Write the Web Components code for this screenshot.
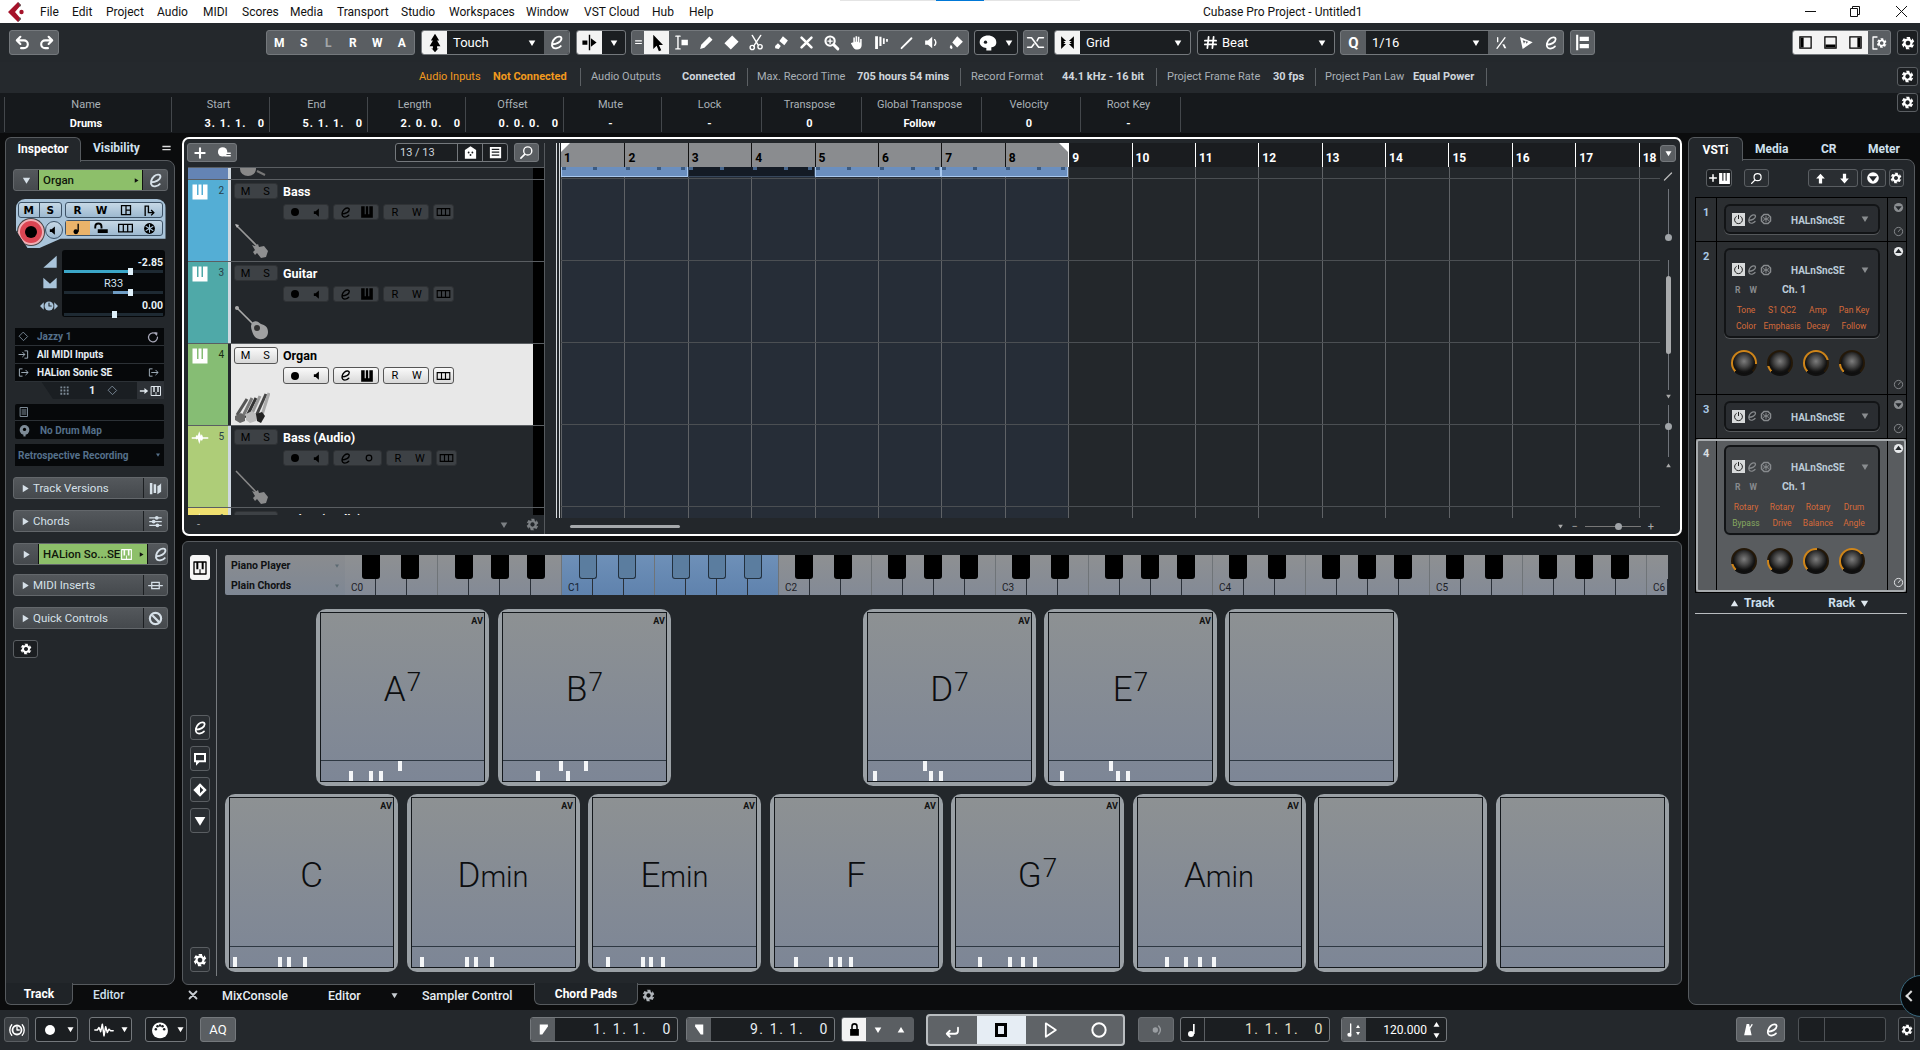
<!DOCTYPE html>
<html lang="en"><head><meta charset="utf-8"><title>Cubase Pro Project - Untitled1</title>
<style>html,body{margin:0;padding:0;background:#0b0c0d;overflow:hidden;width:1920px;height:1050px}</style>
</head><body>
<cb-app></cb-app>
<script>
const BASE=`*{box-sizing:border-box}
:host{display:block;font-family:Roboto,"Liberation Sans",sans-serif;font-size:11px;color:#dfe6ec}
svg{display:block;flex:none}
.g{display:flex;height:25px;border:1px solid #74787c;border-radius:3px;overflow:hidden;background:#5a5e62;color:#fff;align-items:stretch}
.c{flex:1;display:flex;align-items:center;justify-content:center;min-width:0}
.w{background:#f3f3f3;color:#000}.d{background:#1b1e21}
.row{display:flex;align-items:center}
.b{font-weight:700}`;
const S=(d,w=2.5)=>`<path d="${d}" fill="none" stroke="currentColor" stroke-width="${w}" stroke-linecap="round" stroke-linejoin="round"/>`;
const F=d=>`<path d="${d}" fill="currentColor"/>`;
function gearPath(){let o='',n=6,R=11,r=8;for(let i=0;i<n;i++){const a=i*Math.PI*2/n-Math.PI/2,p=(t,q)=>`${(12+q*Math.cos(a+t)).toFixed(1)} ${(12+q*Math.sin(a+t)).toFixed(1)}`;o+=(i?'L':'M')+p(-.3,R)+'L'+p(.3,R)+'L'+p(.55,r)+'L'+p(.95,r)}
return o+'Z M12 8a4 4 0 1 0 .01 0Z'}
const I={
gear:`<path fill-rule="evenodd" d="${gearPath()}" fill="currentColor"/>`,
undo:S('M9 4 4 9l5 5M4 9h10a5.5 5.5 0 0 1 0 11h-4',3),
redo:S('M15 4l5 5-5 5M20 9H10a5.5 5.5 0 0 0 0 11h4',3),
edit:S('M6 14.5c6 0 13-3.5 13-8 0-3.5-5-4-9-.5-4 3.5-6 10-3 13 3 2.5 8 1 11-2',2.6),
touch:F('M12 1 17 9h-2.5l4 7h-4v3l2-1-4.5 5-4.5-5 2 1v-3h-4l4-7H7z'),
auto:F('M11 1h2v22h-2zM2 9h7v6H2zM14 6l8 6-8 6z'),
cursor:F('M7 1v19l4.5-4.5 3 7.5 3.2-1.3-3.2-7.2H20z'),
range:S('M4 3h6M7 3v18M4 21h6',2)+F('M12 8h9v8h-9z'),
pencil:F('M3 21l1.5-6L16 3.5l4.5 4.5L9 19.5z'),
eraser:F('M2 13 13 2l9 9-11 11z'),
scissors:S('M6 2l8 13M18 2 8 17',2)+`<circle cx="6" cy="19" r="3" fill="none" stroke="currentColor" stroke-width="2"/><circle cx="17" cy="18" r="3" fill="none" stroke="currentColor" stroke-width="2"/>`,
glue:F('M14 3l7 6-5 7-7-6z M7 13l4 4-3 4-5-1v-3z'),
x:S('M5 5l14 14M19 5 5 19',3.6),
zoom:`<circle cx="10" cy="10" r="6.5" fill="none" stroke="currentColor" stroke-width="3"/>`+S('M15 15l6 6',4)+S('M7 10h6M10 7v6',2),
hand:F('M6 12h1.5V5h2.2v6h1V3h2.2v8h1V4h2.2v8h1V7h2.2v9c0 4-2.6 6-6 6s-5-1-6.500-4L4 13z'),
comp:F('M3 3h4v18H3zM9 4h3v13H9zM14 6h2.500v8H14zM18.500 7H21v4h-2.500z'),
line:S('M5 20 19 6',2.6),
speaker:F('M3 9h4l6-5v16l-6-5H3z')+S('M16.500 8c2 2.500 2 5.500 0 8',2),
paint:F('M13 3l8 8-8 8-7-7zM4 15c2 2 3 4 2 5.500s-3.500 0-3.500-2z'),
skull:F('M12 3c5 0 10 3 10 8s-4 6-6 6v4H10v-3c-4-.5-8-3-8-7 0-5 5-8 10-8z')+'<circle cx="9" cy="11" r="2" fill="#1b1e21"/>',
xfade:S('M2 6h5l9 12h6M2 18h5l3-4M14 10l2-4h6',2),
snap:F('M3 3l7 7H6L9 12H3zM21 3l-7 7h4l-3 2h6zM3 21l7-7H6l3-2H3zM21 21l-7-7h4l-3-2h6z'),
hash:S('M9 3 7 21M17 3l-2 18M3 9h18M3 15h18',2.8),
frac:S('M7 4v6M18 4 6 20',2)+F('M14 14h3l3 6h-3z'),
wave:F('M3 3l19 8-15 10zM7 8l2 5 2-4 2 4 2-3z'),
align:F('M3 1h3v22H3zM8 4h13v6H8zM8 14h13v6H8z'),
pL:`<rect x="3" y="3" width="18" height="18" fill="none" stroke="currentColor" stroke-width="2"/>`+F('M4 4h5v16H4z'),
pB:`<rect x="3" y="3" width="18" height="18" fill="none" stroke="currentColor" stroke-width="2"/>`+F('M4 15h16v5H4z'),
pR:`<rect x="3" y="3" width="18" height="18" fill="none" stroke="currentColor" stroke-width="2"/>`+F('M15 4h5v16h-5z'),
pS:S('M9 3H3v18h6',2)+`<path fill-rule="evenodd" d="${gearPath()}" fill="currentColor" transform="translate(8 4) scale(.67)"/>`,
plus:S('M12 4v16M4 12h16',3.6),
trk:`<circle cx="9" cy="11" r="7.500" fill="currentColor"/>`+F('M10 12h12v2.200H10zM12 16h10v2.200H12z'),
home:F('M12 2 3 8v14h18V8z')+`<circle cx="9" cy="12" r="1.500" fill="#1b1e21"/><circle cx="15" cy="12" r="1.500" fill="#1b1e21"/><circle cx="12" cy="16" r="1.500" fill="#1b1e21"/>`,
list:`<path fill-rule="evenodd" d="M3 3h18v18H3zM6 6v2h12V6zM6 10.500v2h12v-2zM6 15v2h12v-2z" fill="currentColor"/>`,
search:`<circle cx="14" cy="9.500" r="6.500" fill="none" stroke="currentColor" stroke-width="2.200"/>`+S('M9 15l-6 6',2.600),
down:F('M4 6h16l-8 13z'),
right:F('M6 4l13 8-13 8z'),
up:F('M4 18h16L12 5z'),
keys:S('M3 3h18v18H3z',2)+F('M6.500 3h3v11h-3zM14.500 3h3v11h-3zM11.200 14h1.600v7h-1.600z'),
tv:F('M3 3h4v18H3zM9 5h4v14H9zM15 8c3-1 5-3 6-5v14c-2 1-4 3-6 4z'),
faders:F('M2 5h20v2H2zM2 11h20v2H2zM2 17h20v2H2z')+`<circle cx="14" cy="6" r="3" fill="currentColor"/><circle cx="9" cy="12" r="3" fill="currentColor"/><circle cx="15" cy="18" r="3" fill="currentColor"/>`,
ins:S('M1 12h4M19 12h4',2)+`<rect x="6" y="7" width="12" height="10" fill="none" stroke="currentColor" stroke-width="2"/>`+F('M6 11h12v2H6z'),
qc:`<circle cx="12" cy="12" r="9" fill="none" stroke="currentColor" stroke-width="3.500"/>`+S('M8 8l9 9',3.500),
menu:F('M3 6h18v3H3zM3 13h18v3H3z'),
note:`<circle cx="9" cy="18" r="4.500" fill="currentColor"/>`+F('M12 3h2.500v15H12z'),
lock:F('M5 11h14v11H5z')+S('M8 11V7a4 4 0 0 1 8 0v4',2.500),
rec:`<circle cx="12" cy="12" r="6" fill="currentColor"/>`,
spk:F('M4 9h4l7-6v18l-7-6H4z'),
freeze:`<circle cx="12" cy="12" r="10" fill="currentColor"/>`+`<path d="M12 4v16M5 8l14 8M19 8 5 16" stroke="#a9c4da" stroke-width="2"/>`,
power:`<path d="M8 5a8.500 8.500 0 1 0 8 0M12 2v9" fill="none" stroke="currentColor" stroke-width="2"/>`,
snow:`<path d="M8 3h8l5 5v8l-5 5H8l-5-5V8z" fill="none" stroke="currentColor" stroke-width="3"/><path d="M12 6v12M6 9l12 6M18 9 6 15" stroke="currentColor" stroke-width="2"/>`,
cycle:S('M20 9v4a4 4 0 0 1-4 4H5M9 13l-4 4 4 4',2.400),
play:S('M7 4l12 8-12 8z',2.200),
recO:`<circle cx="12" cy="12" r="8" fill="none" stroke="currentColor" stroke-width="2.400"/>`,
midi:F('M12 3a9.500 9.500 0 1 0 .01 0z')+`<circle cx="7" cy="11" r="1.500" fill="#1b1e21"/><circle cx="17" cy="11" r="1.500" fill="#1b1e21"/><circle cx="9" cy="7.500" r="1.500" fill="#1b1e21"/><circle cx="15" cy="7.500" r="1.500" fill="#1b1e21"/><circle cx="12" cy="6.500" r="1.500" fill="#1b1e21"/>`,
awave:S('M1 12h3M4 12l2-3 2 5 2-9 2 14 2-11 2 7 2-4 2 2h3',1.800),
clock:`<circle cx="12" cy="12" r="6" fill="none" stroke="currentColor" stroke-width="2.400"/>`+S('M12 8v4h3',1.800)+S('M5 5c-3.500 4-3.500 10 0 14M19 5c3.500 4 3.500 10 0 14',1.800),
lm:F('M6 4h13v3l-9 13H6z'),
rm:F('M5 4h13v16h-4L5 7z'),
metro:F('M9 3h4l4 18H5zM17 3l2 1-5 8-1-2z'),
tempo:S('M7 3v18',2)+`<circle cx="5" cy="19" r="3" fill="currentColor"/>`+F('M15 9l3-5 3 5zM15 15l3 5 3-5z'),
monitor:`<circle cx="11" cy="12" r="4" fill="currentColor"/>`+S('M16 6c3 3.500 3 8.500 0 12',2),
comment:F('M3 3h18v14H11l-5 5v-5H3z')+F('M6 6v8h12V6z').replace('currentColor','#2a2e32'),
markerD:F('M12 2 22 12 12 22 2 12z')+F('M12 7l5 5-5 5z').replace('currentColor','#2a2e32'),
arrowU:F('M12 3l8 9h-5v9H9v-9H4z'),
arrowD:F('M12 21l8-9h-5V3H9v9H4z'),
eject:`<circle cx="12" cy="12" r="10" fill="currentColor"/>`+F('M5 9h14l-7 9z').replace('currentColor','#24282c'),
ejectU:`<circle cx="12" cy="12" r="10" fill="currentColor"/>`+F('M5 15h14L12 6z').replace('currentColor','#24282c'),
meter:`<circle cx="12" cy="12" r="9" fill="none" stroke="currentColor" stroke-width="2"/>`+S('M12 12l4-5',2),
loopback:S('M19 7a9 9 0 1 0 2 5',2.400)+F('M14 2l7 1-1 7z'),
grid:F('M3 3h4v4H3zM10 3h4v4h-4zM17 3h4v4h-4zM3 10h4v4H3zM10 10h4v4h-4zM17 10h4v4h-4zM3 17h4v4H3zM10 17h4v4h-4zM17 17h4v4h-4z'),
diamond:S('M12 3l9 9-9 9-9-9z',2),
arrowR:F('M2 10h11V5l9 7-9 7v-5H2z'),
inIc:S('M2 12h12M10 7l5 5-5 5M15 4h6v16h-6',2),
outIc:S('M9 4H3v16h6M8 12h13M17 7l5 5-5 5',2),
sheet:S('M5 3h14v18H5zM8 8h8M8 12h8M8 16h8',2),
info:`<circle cx="12" cy="11" r="9" fill="currentColor"/>`+F('M10 16h4v7h-4z')+`<circle cx="12" cy="10" r="3" fill="#000"/>`,
wedge:F('M2 22 22 4v18z'),
bowl:F('M2 4l10 9 10-9v16H2z'),
pan:F('M0 12l5-5v10zM24 12l-5-5v10z')+`<circle cx="12" cy="12" r="6" fill="currentColor"/>`+S('M12 8v4h3',1.500).replace('currentColor','#23272b'),
strKey:F('M2 2h6v14h2V2h4v14h2V2h6v20H2z'),
strWave:F('M1 11h5l1.500-3 1.500 1L11 3l2 6 1.500-2 1.500 4h7v2h-7l-1.500 3-1.500-2-2 6-2-7-1.500 1L6 13H1z')
};
const ic=(n,s=16,c)=>`<svg width="${s}" height="${s}" viewBox="0 0 24 24" ${c?`style="color:${c}"`:''}>${I[n]}</svg>`;
function place(items){let p=0,o='';for(const [x,w,h,st] of items){o+=`<div style="margin-left:${(x-p)}px;width:${w}px;flex:none;${st||''}">${h}</div>`;p=x+w}return o}
function def(tag,render){customElements.define(tag,class extends HTMLElement{connectedCallback(){if(this.shadowRoot)return;const r=this.attachShadow({mode:'open'});r.innerHTML=`<style>${BASE}</style>`+render(this)}})}
const cells=(arr,cls='')=>arr.map(a=>{const [n,s,k]=Array.isArray(a)?a:[a];return `<div class="c ${k||cls}">${I[n]?ic(n,s||16):`<span class="b" style="font-size:12px">${n}</span>`}</div>`}).join('');

def('cb-app',()=>`<style>:host{width:1920px;height:1050px;display:flex;flex-direction:column;overflow:hidden;background:#0b0c0d}
.main{display:flex;height:877px;flex:none}</style>
<cb-title></cb-title><cb-toolbar></cb-toolbar><cb-status></cb-status><cb-info></cb-info>
<div class="main"><cb-inspector></cb-inspector><cb-center></cb-center><cb-right></cb-right></div>
<cb-transport></cb-transport>`);

def('cb-title',()=>{
const m=[['File',40],['Edit',72],['Project',106],['Audio',157],['MIDI',203],['Scores',242],['Media',290],['Transport',337],['Studio',401],['Workspaces',449],['Window',526],['VST Cloud',584],['Hub',652],['Help',689],['',729]];
const items=m.slice(0,-1).map((a,i)=>[a[1],m[i+1][1]-a[1],a[0]]);
items.unshift([8,18,`<svg width="18" height="20" viewBox="0 0 18 20"><path d="M10 0 0 10l10 10 3-3-6-7 6-7z" fill="#a5132a"/><path d="M10 0l3 3-1 2zM10 20l3-3-1-2z" fill="#555"/><circle cx="13.500" cy="10" r="2.200" fill="#a5132a"/></svg>`]);
return `<style>:host{height:23px;background:#fff;color:#111;font-size:12px;flex:none;position:relative}
.r{display:flex;height:23px;align-items:center;white-space:nowrap}
.top{position:absolute;left:840px;top:0;width:240px;height:1px;background:#e4e4e4}
.top i{display:block;margin-left:96px;width:48px;height:1px;background:#0078d7}</style>
<div class="r">${place(items)}${place([[474,160,'Cubase Pro Project - Untitled1'],[1075,13,`<svg width="13" height="13"><path d="M1 6.500h11" stroke="#111"/></svg>`],[1120,13,`<svg width="13" height="13"><path d="M1.500 3.500h7v8h-7zM3.500 3.500v-2h7v8h-2" fill="none" stroke="#111"/></svg>`],[1166,13,`<svg width="13" height="13"><path d="M1 1l11 11M12 1 1 12" stroke="#111"/></svg>`]])}</div>
<div class="top"><i></i></div>`});

def('cb-toolbar',()=>{
const it=[
[9,50,`<div class="g" style="width:50px">${cells([['undo',17],['redo',17]])}</div>`],
[266,149,`<div class="g">${cells(['M','S','<span style="opacity:.45">L</span>','R','W','A'])}</div>`],
[421,149,`<div class="g" style="background:#1b1e21"><div class="c w" style="flex:none;width:25px">${ic('touch',20)}</div><div style="flex:1;display:flex;align-items:center;font-size:13px;padding-left:6px;justify-content:space-between;padding-right:7px"><span>Touch</span>${ic('down',10)}</div><div class="c" style="flex:none;width:25px;background:#5a5e62">${ic('edit',17)}</div></div>`],
[576,50,`<div class="g" style="background:#1b1e21"><div class="c w" style="flex:none;width:25px">${ic('auto',17)}</div><div class="c">${ic('down',10)}</div></div>`],
[631,338,`<div class="g"><div class="c" style="flex:none;width:12px">${ic('menu',9)}</div><div class="c w" style="flex:none;width:25px">${ic('cursor',18)}</div>${['range','pencil','eraser','scissors','glue','x','zoom','hand','comp','line','speaker','paint'].map(n=>`<div class="c" style="flex:none;width:25px">${ic(n,17)}</div>`).join('')}</div>`],
[974,44,`<div class="g" style="background:#1b1e21"><div class="c" style="flex:none;width:26px">${ic('skull',20)}</div><div class="c">${ic('down',10)}</div></div>`],
[1023,25,`<div class="g"><div class="c">${ic('xfade',19)}</div></div>`],
[1054,137,`<div class="g" style="background:#1b1e21"><div class="c w" style="flex:none;width:25px">${ic('snap',17)}</div><div style="flex:1;display:flex;align-items:center;font-size:13px;padding:0 7px 0 6px;justify-content:space-between"><span>Grid</span>${ic('down',10)}</div></div>`],
[1197,138,`<div class="g" style="background:#1b1e21"><div class="c" style="flex:none;width:24px">${ic('hash',15)}</div><div style="flex:1;display:flex;align-items:center;font-size:13px;padding:0 7px 0 0;justify-content:space-between"><span>Beat</span>${ic('down',10)}</div></div>`],
[1340,224,`<div class="g"><div class="c" style="flex:none;width:25px;font-size:15px;font-weight:700">Q</div><div class="d" style="flex:1;display:flex;align-items:center;font-size:13px;padding:0 7px 0 6px;justify-content:space-between"><span>1/16</span>${ic('down',10)}</div>${['frac','wave','edit'].map(n=>`<div class="c" style="flex:none;width:25px">${ic(n,16)}</div>`).join('')}</div>`],
[1570,25,`<div class="g"><div class="c">${ic('align',17)}</div></div>`],
[1792,99,`<div class="g"><div class="c w" style="flex:none;width:25px">${ic('pL',15)}</div><div class="c w" style="flex:none;width:25px">${ic('pB',15)}</div><div class="c w" style="flex:none;width:25px">${ic('pR',15)}</div><div class="c">${ic('pS',16)}</div></div>`],
[1897,21,`<div class="g" style="background:#1b1e21;border-color:#5a5e62"><div class="c">${ic('gear',14)}</div></div>`]];
return `<style>:host{height:39px;flex:none;background:#24282c}.r{display:flex;padding-top:7px;height:39px}</style><div class="r">${place(it)}</div>`});

def('cb-status',()=>{
const A=[['Audio Inputs',419,'color:#f29a1e'],['Not Connected',493,'color:#f29a1e;font-weight:700'],['|',580],['Audio Outputs',591,'color:#a9b0b6'],['Connected',682,'font-weight:700;color:#cfd6dc'],['|',747],['Max. Record Time',757,'color:#a9b0b6'],['705 hours 54 mins',857,'font-weight:700;color:#cfd6dc'],['|',960],['Record Format',971,'color:#a9b0b6'],['44.1 kHz - 16 bit',1062,'font-weight:700;color:#cfd6dc'],['|',1156],['Project Frame Rate',1167,'color:#a9b0b6'],['30 fps',1273,'font-weight:700;color:#cfd6dc'],['|',1315],['Project Pan Law',1325,'color:#a9b0b6'],['Equal Power',1413,'font-weight:700;color:#cfd6dc'],['|',1486],['',1500]];
const items=A.slice(0,-1).map((a,i)=>a[0]==='|'?[a[1],A[i+1][1]-a[1],`<div style="width:1px;height:18px;background:#5c6064"></div>`]:[a[1],A[i+1][1]-a[1],a[0],(a[2]||'')+';white-space:nowrap']);
items.push([1897,21,`<div class="g" style="height:19px;background:#1b1e21;border-color:#5a5e62"><div class="c">${ic('gear',13)}</div></div>`]);
return `<style>:host{height:31px;flex:none;background:#25292d;font-size:11px}.r{display:flex;height:31px;align-items:center;padding-bottom:2px}</style><div class="r">${place(items)}</div>`});

def('cb-info',()=>{
const C=[['Name','Drums',4,167,'c'],['Start','3. 1. 1.   0',171,98],['End','5. 1. 1.   0',269,98],['Length','2. 0. 0.   0',367,98],['Offset','0. 0. 0.   0',465,98],['Mute','-',563,98,'c'],['Lock','-',661,100,'c'],['Transpose','0',761,100,'c'],['Global Transpose','Follow',861,120,'c'],['Velocity','0',981,99,'c'],['Root Key','-',1080,100,'c']];
const it=C.map(([l,v,x,w,k])=>[x,w,`<div class="cell"><span class="l">${l}</span><span class="v" style="${k?'text-align:center':'text-align:right;letter-spacing:1px'}">${v}</span></div>`]);
it.push([1180,1,'<div class="cell"></div>']);
it.push([1897,21,`<div class="g" style="height:19px;background:#1b1e21;border-color:#5a5e62"><div class="c">${ic('gear',13)}</div></div>`]);
return `<style>:host{height:40px;flex:none;background:#16191c}.r{display:flex;height:40px;padding-top:0}
.cell{height:35px;margin-top:4px;border-left:1px solid #43474b;display:flex;flex-direction:column;padding:0 4px 0 0}
.l{text-align:center;color:#aab1b7;height:19px;line-height:15px}.v{color:#fff;font-weight:700;white-space:pre;height:15px;line-height:15px}</style><div class="r">${place(it)}</div>`});

def('cb-sec',h=>{
const green=h.hasAttribute('green');
return `<style>:host{width:155px;height:22px;margin-left:7px;flex:none}
.s{display:flex;height:22px;border:1px solid #63676b;border-radius:3px;overflow:hidden;background:linear-gradient(#54585c,#45494d);font-size:11.500px;color:#d6e0e8;align-items:center}
.a{width:${green?24:19}px;display:flex;align-items:center;justify-content:center;padding-left:${green?0:3}px;flex:none}
.t{flex:1;padding-left:${green?4:0}px;height:100%;display:flex;align-items:center;${green?'background:#8dbf6a;color:#10170b;font-weight:500;border-left:1px solid #111;border-right:1px solid #111':''};white-space:nowrap}
.e{width:24px;flex:none;display:flex;align-items:center;justify-content:center;height:100%;${green?'':'border-left:1px solid #1c1f22'}}</style>
<div class="s"><div class="a">${ic(h.getAttribute('dn')!=null?'down':'right',11)}</div><div class="t"><slot></slot>${green?`<span style="margin-left:auto;display:flex;align-items:center;gap:5px;padding-right:2px">${h.getAttribute('k')!=null?ic('keys',13,'#fff'):''}${ic('right',7,'#111')}</span>`:''}</div><div class="e">${ic(h.getAttribute('ic')||'edit',h.getAttribute('ic')?15:17)}</div></div>`});

def('cb-inspector',()=>`<style>:host{width:170px;margin-left:5px;margin-top:4px;flex:none;height:868px;display:flex;flex-direction:column}
.tabs{display:flex;height:23px;flex:none;position:relative;z-index:1;font-size:12px;font-weight:700;align-items:flex-start}
.t1{width:76px;border:1.500px solid #565a5e;border-bottom:0;border-radius:6px 6px 0 0;background:#23272b;color:#fff;display:flex;align-items:center;justify-content:center;height:25px;padding-bottom:3px}
.t2{flex:1;height:22px;display:flex;align-items:center;justify-content:space-between;padding:0 3px 0 12px;color:#cfe0ee}
.body{flex:none;height:825px;background:#23272b;border:1.500px solid #565a5e;border-radius:0 8px 8px 0;display:flex;flex-direction:column;padding-top:8px;position:relative}
.foot{display:flex;height:20px;flex:none;font-size:12px;font-weight:700;position:relative}
.ft{width:68px;height:22px;margin-top:-2px;background:#1f2327;border:1.500px solid #565a5e;border-top:0;border-radius:0 0 6px 6px;display:flex;align-items:center;justify-content:center;color:#fff}
.ft2{margin-left:20px;display:flex;align-items:center;color:#cfe0ee;font-weight:500}
.strip{margin-left:9.500px;margin-top:8px;width:150px;height:49px;background:#a9c4da;border-radius:9px;clip-path:polygon(0 0,100% 0,100% 81%,30% 81%,16% 100%,8% 100%,0 62%);display:flex;padding:3px 3px 0 2px;flex:none;color:#000}
.bg{height:16px;border:1px solid #3d5266;border-radius:3px;display:flex;background:linear-gradient(#c6d8e6,#9db9d0)}
.bg>div{flex:1;display:flex;align-items:center;justify-content:center;font-weight:700;font-size:10.500px;font-family:"DejaVu Sans",sans-serif;color:#000}
.round{border-radius:50%;display:flex;align-items:center;justify-content:center;flex:none}
.fad{display:flex;margin-top:1.500px;flex:none}
.fl{width:56px;display:flex;flex-direction:column;align-items:flex-end;padding-right:4px;color:#a9c4da;padding-top:3.500px;gap:6px}
.fb{width:103px;height:67px;background:#06080a;border-radius:3px;padding:6px 2px 0 2px;display:flex;flex-direction:column}
.vl{height:13px;line-height:13px;color:#e8f0f6;font-weight:700;text-align:right;font-size:10.500px;flex:none}
.tr{height:3px;background:#1e2a33;position:relative;margin:1.500px 0 3.500px;flex:none}
.tr i{position:absolute;left:0;top:0;height:3px;background:#3ba6c8}
.tr b{position:absolute;top:-2px;width:5px;height:7px;background:#dff1fb}
.rt{margin:11.500px 0 0 9px;width:149px;flex:none;height:71px;display:flex;flex-direction:column}
.rr{height:18px;background:#06080a;border-bottom:1px solid #2c3136;display:flex;align-items:center;padding:0 3px;font-size:10px;font-weight:700;color:#e6eef5;white-space:nowrap}
.rr svg{margin-right:5px}
.rl{height:17px;background:#1a1e22;display:flex;align-items:center}
.bx{margin:5px 0 0 9px;width:149px;height:35px;background:#06080a;border-radius:2px;flex:none}
.ret{margin:5px 0 11px 9px;width:149px;height:22px;background:#06080a;flex:none;color:#55708a;font-size:10px;font-weight:700;display:flex;align-items:center;justify-content:space-between;padding:0 3px}
.dim{color:#55708a}</style>
<div class="tabs"><div class="t1">Inspector</div><div class="t2"><span>Visibility</span>${ic('menu',11,'#ddd')}</div></div>
<div class="body">
<cb-sec green dn>Organ</cb-sec>
<div class="strip">
 <div style="width:46px;flex:none;display:flex;flex-direction:column">
  <div class="bg" style="width:44px"><div style="border-right:1px solid #3d5266">M</div><div>S</div></div>
  <div class="row" style="margin-top:1px;align-items:flex-start">
   <div class="round" style="width:26px;height:26px;background:#dc4653;border:2px solid #f0b0b6;box-shadow:0 0 0 1px #444">${ic('rec',24,'#000')}</div>
   <div class="round" style="width:18px;height:18px;margin:2px 0 0 1px;background:linear-gradient(#c6d8e6,#9db9d0);border:1px solid #3d5266">${ic('spk',11,'#000')}</div>
  </div>
 </div>
 <div style="flex:1;display:flex;flex-direction:column;gap:2px;margin-left:1px">
  <div class="bg"><div>R</div><div>W</div><div>${`<svg width="12" height="12" viewBox="0 0 24 24"><path d="M3 3h18v18H3zM12 3v18M12 12h9" fill="none" stroke="#000" stroke-width="2.500"/></svg>`}</div><div><svg width="13" height="13" viewBox="0 0 24 24"><path d="M4 22V4h6v12h10M15 11l5 5-5 5" fill="none" stroke="#000" stroke-width="2.500"/></svg></div></div>
  <div class="bg"><div style="background:#eab36a">${ic('note',13,'#000')}</div><div><svg width="15" height="13" viewBox="0 0 24 20"><path d="M2 10V7a5 5 0 0 1 10 0v3" fill="none" stroke="#000" stroke-width="3"/><path d="M6 11h16v6H6z"/></svg></div><div><svg width="15" height="10" viewBox="0 0 24 14"><path d="M1 1h22v12H1zM8.500 1v12M15.500 1v12" fill="none" stroke="#000" stroke-width="2"/></svg></div><div>${ic('freeze',13,'#000')}</div></div>
 </div>
</div>
<div class="fad"><div class="fl">${ic('wedge',16)}${ic('bowl',16)}${ic('pan',18)}</div>
<div class="fb"><div class="vl">-2.85</div><div class="tr"><i style="width:65px"></i><b style="left:64px"></b></div>
<div class="vl" style="text-align:center;font-weight:400;color:#cfe0ee;font-size:11px">R33</div><div class="tr" style="margin-bottom:5px"><i style="left:49px;width:16px;background:#6e9cc4"></i><b style="left:64px"></b></div>
<div class="vl">0.00</div><div class="tr" style="margin-top:1px"><b style="left:48px"></b></div></div></div>
<div class="rt">
 <div class="rr dim">${ic('diamond',11,'#7b8a98')}<span class="dim" style="margin-left:3px">Jazzy 1</span><span style="margin-left:auto;margin-right:-3px">${ic('loopback',12,'#aab')}</span></div>
 <div class="rr">${ic('inIc',11,'#a9b8c4')}<span style="margin-left:3px">All MIDI Inputs</span></div>
 <div class="rr" style="background:#06080a">${ic('outIc',11,'#a9b8c4')}<span style="margin-left:3px">HALion Sonic SE</span><span style="margin-left:auto;margin-right:-3px">${ic('outIc',11,'#a9b8c4')}</span></div>
 <div class="rl"><div style="width:38px;height:17px;background:#23272b;clip-path:polygon(0 0,0 100%,100% 100%,70% 0)"></div><div style="margin-left:6px">${ic('grid',11,'#7d8a96')}</div><span class="b" style="margin-left:19px;color:#e6eef5">1</span><div style="margin-left:12px">${ic('diamond',11,'#7b8a98')}</div><div style="margin-left:auto;width:27px;height:17px;background:#2d3136;display:flex;align-items:center;gap:1px;padding-left:2px">${ic('arrowR',10,'#dfe6ec')}${ic('keys',12,'#dfe6ec')}</div></div>
</div>
<div class="bx"><div class="rr" style="background:none;height:17px">${ic('sheet',12,'#7d8a96')}</div><div class="rr dim" style="background:none;border:0;height:18px">${ic('info',13,'#7d8a96')}<span class="dim" style="margin-left:4px">No Drum Map</span></div></div>
<div class="ret"><span>Retrospective Recording</span>${ic('down',6,'#55708a')}</div>
<cb-sec ic="tv">Track Versions</cb-sec>
<cb-sec ic="faders" style="margin-top:11px">Chords</cb-sec>
<cb-sec green k style="margin-top:11px">HALion So...SE</cb-sec>
<cb-sec ic="ins" style="margin-top:9px">MIDI Inserts</cb-sec>
<cb-sec ic="qc" style="margin-top:11px">Quick Controls</cb-sec>
<div class="g" style="margin:11px 0 0 7px;width:25px;height:18px;background:#1b1e21;flex:none;border-color:#5a5e62"><div class="c">${ic('gear',12)}</div></div>
</div>
<div class="foot"><div class="ft">Track</div><div class="ft2">Editor</div></div>`);

def('cb-track',h=>{
const sel=h.hasAttribute('sel'),aud=h.hasAttribute('audio');
const bd=sel?'1px solid #555':'1px solid #2f3235';
const gg=`display:flex;height:${sel?17:16}px;border:${bd};border-radius:3px;overflow:hidden;background:${sel?'linear-gradient(#fafafa,#d8d8d8)':'#3d4145'};color:#000;align-items:center`;
const ltr=`flex:1;display:flex;align-items:center;justify-content:center;font:700 10.500px "DejaVu Sans",sans-serif;height:100%;color:#000`;
const inst={bass:`<svg width="36" height="36" viewBox="0 0 36 36"><path d="M2 2l21 21" stroke="#999" stroke-width="1.600"/><path d="M1 1l4 1-2 3z" fill="#bbb"/><path d="M18 22l3 1 3-2 1 3 5-1 4 5-2 6-5 1-4-5-2 2-2-3 2-2z" fill="#8f9091"/></svg>`,
guitar:`<svg width="36" height="36" viewBox="0 0 36 36"><path d="M2 2l20 20" stroke="#aaa" stroke-width="1.600"/><circle cx="3" cy="3" r="2" fill="#aaa"/><path d="M19 17c4-2 6 1 8 2 4 1 7 3 7 8s-4 8-9 7-6-5-7-8c-1-3-2-6 1-9z" fill="#a0a1a2"/><circle cx="23" cy="23" r="3" fill="#333"/></svg>`,
organ:`<svg width="36" height="36" viewBox="0 0 36 36"><g fill="none" stroke-width="3"><path d="M8 30 18 10" stroke="#777"/><path d="M12 30 22 10" stroke="#333"/><path d="M16 30 26 8" stroke="#999"/><path d="M22 28 32 6" stroke="#444"/><path d="M27 30 35 5" stroke="#aaa"/><path d="M3 27 13 11" stroke="#555"/></g><path d="M1 28l6-3 4 3v5l-5 2-5-3z" fill="#666"/><path d="M12 26l6-3 5 4-1 6-6 2-4-3z" fill="#bbb"/><path d="M22 26l6-2 3 4-4 7-4-2z" fill="#222"/></svg>`,
bass2:`<svg width="36" height="36" viewBox="0 0 36 36"><path d="M2 2l21 22" stroke="#888" stroke-width="1.500"/><path d="M18 22l3 1 3-2 1 3 5-1 4 5-2 6-5 1-4-5-2 2-2-3 2-2z" fill="#8a8b8c"/></svg>`};
const mid=aud?`<svg width="8" height="8" viewBox="0 0 10 10"><circle cx="5" cy="5" r="3.500" fill="none" stroke="#000" stroke-width="1.500"/></svg>`:ic('strKey',14,'#000');
return `<style>:host{height:82px;flex:none;display:block;border-top:1px solid #5a5e62}
.t{display:flex;height:81px;overflow:hidden}
.s{width:40px;flex:none;background:${h.getAttribute('color')};color:#fff;display:flex;justify-content:space-between;padding:3px 4px 0 3px}
.num{color:${sel?'#1a2b10':'#28404a'};font-size:10px;margin-top:2px}
.l{width:3px;flex:none;background:${sel?'#23272b':'#cfd8e0'}}
.m{flex:1;background:${sel?'#e8e8e8':'#23272b'};color:${sel?'#000':'#fff'};padding:3px 0 0 3px}
.n{font-size:12.500px;font-weight:700;margin-left:5px;white-space:nowrap}
.rb{width:11px;flex:none;background:#000}</style>
<div class="t"><div class="s">${ic(aud?'strWave':'strKey',18,'#fff')}<span class="num">${h.getAttribute('n')}</span></div><div class="l"></div>
<div class="m">
 <div class="row"><div style="${gg};width:44px"><div style="${ltr};border-right:1px solid ${sel?'#555':'#25282b'}">M</div><div style="${ltr}">S</div></div><div class="n"><slot></slot></div></div>
 <div class="row" style="margin:${sel?3:5}px 0 0 49px;gap:4px">
  <div style="${gg};width:46px"><div style="${ltr};${sel?'background:#c4344a':''}">${ic('rec',16,'#000')}</div><div style="${ltr}">${ic('spk',11,'#000')}</div></div>
  <div style="${gg};width:${aud?49:46}px"><div style="${ltr}">${ic('edit',13,'#000')}</div><div style="${ltr}">${mid}</div></div>
  <div style="${gg};width:46px"><div style="${ltr}">R</div><div style="${ltr}">W</div></div>
  <div style="${gg};width:21px;justify-content:center"><svg width="15" height="8" viewBox="0 0 24 14"><path d="M1 1h22v12H1zM8.500 1v12M15.500 1v12" fill="none" stroke="#000" stroke-width="2"/></svg></div>
 </div>
 <div style="margin:${sel?4:3}px 0 0 0">${inst[h.getAttribute('img')]||''}</div>
</div><div class="rb"></div></div>`});

def('cb-center',()=>`<style>:host{margin-left:7px;margin-top:4px;width:1500px;flex:none;display:flex;flex-direction:column;height:868px}</style>
<cb-project></cb-project><cb-lower></cb-lower><cb-ltabs></cb-ltabs>`);

def('cb-ltabs',()=>`<style>:host{height:20px;flex:none;font-size:12.500px;font-weight:500;color:#e6ecf2}
.r{display:flex;align-items:center;height:20px;white-space:nowrap}</style>
<div class="r">${place([[5,12,ic('x',12,'#c8cdd2')],[40,66,'MixConsole'],[146,34,'Editor'],[208,10,ic('down',9,'#c8cdd2')],[240,92,'Sampler Control'],[352,104,'Chord Pads','display:flex;height:22px;margin-top:-2px;background:#1f2327;border:1.500px solid #565a5e;border-top:0;border-radius:0 0 6px 6px;align-items:center;justify-content:center;font-weight:700;color:#fff;font-size:12px'],[460,13,ic('gear',13,'#b0b5ba')]])}</div>`);

def('cb-project',()=>{
const rul=[];for(let i=1;i<=18;i++)rul.push(`<div class="bar ${i<=8?'in':'out'}" style="${i==1?'border-left:0':''}"><span>${i}</span></div>`);
const ev=(w,c,k)=>{const ds=k.map(p=>`<i style="left:${p}px;background:${c=='d'?'#47668c':'#3a5a82'}"></i>`).join('');return `<div class="ev ${c}" style="width:${w}px">${ds}</div>`};
const pt=[0,31,64,95,119].filter(p=>p<121);
return `<style>:host{height:399px;flex:none;border:2px solid #fff;border-radius:7px;background:#23272b;display:flex;padding:4px 0 0 4px}
.left{width:357px;flex:none;display:flex;flex-direction:column;border-right:1px solid #55595d;height:391px}
.tools{height:24px;flex:none;display:flex}
.tracks{height:348px;flex:none;overflow:hidden}
.foot{height:19px;flex:none;display:flex;align-items:center;color:#aaa;padding-left:9px;border-top:0}
.lines{width:4px;margin-left:11px;flex:none;border-left:1px solid #d9dde0;border-right:1px solid #d9dde0;height:375px;margin-right:1px}
.ec{width:1099px;flex:none;display:flex;flex-direction:column}
.ruler{height:24px;flex:none;display:flex;background:#1a1c1f;overflow:hidden;font-size:12px;font-weight:700}
.bar{width:63.400px;flex:none;border-left:1px solid #fff;padding:8px 0 0 3px;color:#fff;position:relative}
.bar.in{background:#8a8c8f;color:#000;border-left-color:#111}
.tri{position:absolute;top:0;width:0;height:0;border-top:9px solid #fff}
.area{height:351px;flex:none;position:relative;overflow:hidden;background-color:#23272b;
background-image:repeating-linear-gradient(90deg,#5f6266 0 1px,transparent 1px 63.400px),linear-gradient(#262d37,#262d37);background-size:auto,507px 100%;background-repeat:repeat,no-repeat}
.hl{height:82px;border-bottom:1px solid #4b4f53;position:relative}
.evs{position:absolute;left:0;top:0;display:flex}
.ev{height:10px;position:relative;border:1px solid #a9c8ee;border-top:0;background:#6b8fbf}
.ev.d{background:#141b25;border-color:#37475c}
.ev i{position:absolute;top:0;width:4px;height:3px}
.sb{height:16px;flex:none;display:flex;align-items:center;color:#aaa}
.vc{width:16px;flex:none;display:flex;flex-direction:column;align-items:center}
.vl{width:1px;background:#70747a;flex:none;position:relative}
.dot{position:absolute;left:-3px;width:7px;height:7px;background:#a0a4a8;border-radius:50%}</style>
<div class="left">
 <div class="tools">${place([[-1,50,`<div class="g" style="height:19px">${cells([['plus',14],['trk',15]])}</div>`],[207,113,`<div class="g" style="height:19px;background:#1b1e21"><div style="flex:1;display:flex;align-items:center;padding-left:4px;font-size:11px;color:#cfd6dc">13 / 13</div><div class="c" style="flex:none;width:25px;border-left:1px solid #74787c">${ic('home',15,'#fff')}</div><div class="c" style="flex:none;width:25px;border-left:1px solid #74787c">${ic('list',15,'#fff')}</div></div>`],[326,25,`<div class="g" style="height:19px"><div class="c">${ic('search',15)}</div></div>`]])}</div>
 <div class="tracks">
  <div style="height:12px;border-top:1px solid #5a5e62;display:flex;overflow:hidden"><div style="width:40px;background:#6484b5"></div><div style="width:3px;background:#cfd8e0"></div><div style="flex:1;padding-left:8px"><svg width="28" height="11" viewBox="0 0 28 11"><ellipse cx="9" cy="1" rx="8" ry="7" fill="#888"/><path d="M18 3l8 4" stroke="#777" stroke-width="2"/></svg></div><div style="width:11px;background:#000"></div></div>
  <cb-track n="2" color="#54aed5" img="bass">Bass</cb-track>
  <cb-track n="3" color="#4fa9a8" img="guitar">Guitar</cb-track>
  <cb-track n="4" color="#86bd74" img="organ" sel>Organ</cb-track>
  <cb-track n="5" color="#aecd78" img="bass2" audio>Bass (Audio)</cb-track>
  <cb-track n="6" color="#f0e070" audio>Guitar (Audio)</cb-track>
 </div>
 <div class="foot"><span>-</span><span style="margin-left:auto;margin-right:17px">${ic('down',10,'#7c8084')}</span><span style="margin-right:5px">${ic('gear',13,'#7c8084')}</span></div>
</div>
<div class="lines"></div>
<div class="ec">
 <div class="ruler" style="position:relative">${rul.join('')}<div class="tri" style="left:0;border-right:9px solid transparent"></div><div class="tri" style="left:498px;border-left:9px solid transparent"></div></div>
 <div class="area"><div style="position:relative">
   <div class="hl" style="height:12px"></div><div class="hl"></div><div class="hl"></div><div class="hl"></div><div class="hl"></div></div>
   <div class="evs">${ev(126.8,'',pt)}${ev(126.8,'d',pt)}${ev(126.8,'',pt)}${ev(126.8,'',pt)}</div>
 </div>
 <div class="sb"><div style="width:110px;height:3px;background:#a6a9ac;margin-left:9px;border-radius:2px"></div><div style="margin-left:auto;display:flex;align-items:center;gap:7px;padding-right:6px">${ic('down',7,'#aaa')}<span>−</span><div style="width:56px;height:1px;background:#777;position:relative"><div class="dot" style="top:-3px;left:30px"></div></div><span>+</span></div></div>
</div>
<div class="vc">
 <div class="g" style="width:16px;height:17px;margin-top:2px;flex:none"><div class="c">${ic('down',9)}</div></div>
 <div style="margin-top:8px">${ic('line',12,'#bbb')}</div>
 <div class="vl" style="height:51px;margin-top:7px"><div class="dot" style="bottom:-1px"></div></div>
 <div class="vl" style="height:130px;margin-top:20px;display:flex;justify-content:center"><div style="width:5px;height:78px;background:#a8aaac;border-radius:3px;flex:none;margin-top:16px;position:relative"></div></div>
 <div style="margin-top:3px;margin-bottom:3px">${ic('down',7,'#aaa')}</div>
 <div class="vl" style="height:52px;margin-top:2px"><div class="dot" style="top:18px"></div></div>
 <div style="margin-top:5px">${ic('up',7,'#aaa')}</div>
</div>`});

def('cb-pad',h=>{
const marks=(h.getAttribute('marks')||'').split(',').filter(Boolean).map(m=>{const u=m.endsWith('u');return `<i style="left:${parseFloat(m)-4}px;${u?'top:0':'bottom:0'}"></i>`}).join('');
const sup=h.getAttribute('sup'),min=h.getAttribute('min'),av=h.hasAttribute('av');
return `<style>:host{width:173px;flex:none;height:100%}
.o{height:100%;background:#9aa0a5;border-radius:10px;padding:3px 4px 4px 4px;display:flex}
.i{flex:1;border:1px solid #14181c;border-radius:7px 7px ${h.hasAttribute('bl')?'0 0 0 10':'2 2 2 2'}px;background:linear-gradient(#8d9193,#7d8696);display:flex;flex-direction:column;position:relative;overflow:hidden}
.av{position:absolute;right:1px;top:2px;font:700 9.500px Roboto,sans-serif;color:#111;transform:scaleX(.95)}
.ch{flex:1;display:flex;align-items:center;justify-content:center;font:300 35px Roboto,"Liberation Sans",sans-serif;color:#0c0d0f;padding-top:6px}
sup{font-size:26px;line-height:0;vertical-align:10px;margin-left:1px}.mn{font-size:29px}
.mk{height:21px;flex:none;border-top:1px solid #2e3842;position:relative;overflow:hidden}
.mk i{position:absolute;width:4px;height:10px;background:#f4f6f8}</style>
<div class="o"><div class="i">${av?'<span class="av">AV</span>':''}<div class="ch"><span><slot></slot>${sup?`<sup>${sup}</sup>`:''}${min?`<span class="mn">${min}</span>`:''}</span></div><div class="mk">${marks}</div></div></div>`});

def('cb-keyboard',()=>{
let ks='';for(let o=0;o<=6;o++){const blue=o==1;for(let i=0;i<(o==6?1:7);i++){ks+=`<div class="wk ${blue?'bl':''} ${(i==2||i==6)?'full':''}" style="${o==6?'width:21px':''}">${i==0?`<span>C${o}</span>`:''}</div>`}}
let bl='';for(let o=0;o<6;o++){for(const x of [17,56,110,146,182]){bl+=`<i class="${o==1?'bk bb':'bk'}" style="left:${o*217+x-(o*0.3)}px"></i>`}}
return `<style>:host{height:40px;flex:none;display:flex}
.lbl{width:120px;flex:none;background:linear-gradient(#8a8c8f,#7e8794);color:#101214;font-weight:700;font-size:10.500px;display:flex;flex-direction:column;justify-content:space-between;padding:3px 5px 2px 6px;border-radius:2px 0 0 2px;position:relative}
.lbl div{display:flex;justify-content:space-between;align-items:center;height:15px}
.keys{display:flex;position:relative;overflow:hidden}
.wk{width:31px;height:40px;flex:none;background:linear-gradient(#8e9092,#838a96);position:relative;font-size:10px;color:#14181c}
.wk::after{content:"";position:absolute;right:0;bottom:0;width:1px;height:16px;background:#2a3038}
.wk.full::after{height:40px;background:#6f7478}
.wk.bl{background:linear-gradient(#6e90b8,#5f82ad)}
.wk span{position:absolute;left:6px;bottom:2px;color:#1c2026}
.wk.bl span{color:#12202e}
.bk{position:absolute;top:0;width:18px;height:24px;background:#000;border-radius:0 0 3px 3px}
.bb{background:#5b7d9f;border:1px solid #22303e;border-top:0}</style>
<div class="lbl"><div><span>Piano Player</span>${ic('down',6,'#5c6a72')}</div><div><span>Plain Chords</span>${ic('down',6,'#5c6a72')}</div></div>
<div class="keys">${ks}${bl}</div>`});

def('cb-lower',()=>{
const btn=(n,mt,w)=>`<div class="g" style="width:20px;height:25px;flex:none;margin-top:${mt}px;${w?'background:#f6f6f6;color:#000;border-color:#f6f6f6':'background:#2a2e32;border-color:#5a5e62'}"><div class="c">${ic(n,n=='gear'?14:16)}</div></div>`;
const p1=[[91,173,`<cb-pad sup="7" av marks="32,52,62,81u">A</cb-pad>`],[273,173,`<cb-pad sup="7" av marks="37,67,60u,85u">B</cb-pad>`],[638,173,`<cb-pad sup="7" av marks="9,59u,65,75">D</cb-pad>`],[819,173,`<cb-pad sup="7" av marks="15,64u,71,81">E</cb-pad>`],[1000,173,`<cb-pad></cb-pad>`]];
return `<style>:host{height:444px;margin-top:5px;flex:none;background:#23272b;border:1.500px solid #565a5e;border-radius:6px;display:block}
.wrap{display:flex;height:441px}
.lc{width:34px;flex:none;border-right:1px solid #777b7f;margin-top:7px;height:427px;padding-left:7px;display:flex;flex-direction:column}
.ct{margin-left:8px;display:flex;flex-direction:column;padding-top:13px}
.r1{display:flex;height:177px;margin-top:14px;flex:none}
.r2{display:flex;gap:8.500px;height:178px;margin-top:8px;flex:none}</style>
<div class="wrap"><div class="lc"><div style="margin-top:6px">${btn('keys',0,1)}</div>${btn('edit',135)}${btn('comment',6)}${btn('markerD',6)}${btn('down',6)}${btn('gear',114)}</div>
<div class="ct"><cb-keyboard></cb-keyboard>
<div class="r1">${place(p1)}</div>
<div class="r2"><cb-pad av bl marks="7,52,61,77">C</cb-pad><cb-pad av min="min" marks="12,57,66,82">D</cb-pad><cb-pad av min="min" marks="17,52,60,72">E</cb-pad><cb-pad av marks="23,58,67,78">F</cb-pad><cb-pad sup="7" av marks="26,56,69,81">G</cb-pad><cb-pad av min="min" marks="31,50,64,78">A</cb-pad><cb-pad></cb-pad><cb-pad></cb-pad></div></div></div>`});

def('cb-slot',h=>{
const open=h.hasAttribute('open'),hi=h.hasAttribute('hi'),labs=(h.getAttribute('labs')||'').split('|'),arcs=(h.getAttribute('arcs')||'').split(',');
const tc='#b9c9d6';
const lab=labs.map(l=>{const [a,b,c]=l.split('/');return `<div class="lb"><span>${a}</span><span ${c?'style="color:#86a860"':''}>${b}</span></div>`}).join('');
const kn=arcs.map(a=>`<div class="k" style="--a:${a}deg"><i></i></div>`).join('');
return `<style>:host{height:${open?153:44}px;flex:none;display:flex;${hi?'':'border-bottom:1px solid #000'};position:relative;color:${tc};background:${hi?'#595c5f':'#2b2e31'}}
.f{position:absolute;inset:0;border:2px solid #a7abae;border-radius:3px;pointer-events:none}
.n{width:21px;flex:none;border-right:1px solid #000;font-weight:700;font-size:11px;color:${hi?'#d8dde0':'#a9c8e4'};padding:8px 0 0 7px}
.bd{width:170px;flex:none;padding:6px 7px 0}
.r{width:21px;flex:none;border-left:1px solid #000;display:flex;flex-direction:column;align-items:center;padding-top:4px;justify-content:space-between;padding-bottom:4px;color:${hi?'#e8eaec':'#8a8d90'}}
.p{border:2px solid #121416;border-radius:6px;background:${hi?'#3f4245':'#2a2d31'};height:${open?90:30}px;padding:${open?6:5.5}px 0 0 6px;box-shadow:0 1px 0 #55585b}
.rw{display:flex;align-items:center;height:15px;font-size:10px;font-weight:700}
.pw{width:13px;height:13px;background:#d8dadb;color:#111;display:flex;align-items:center;justify-content:center;flex:none}
.lbs{display:flex;margin-top:9px;padding-right:6px;margin-left:-4px}
.lb{width:36px;display:flex;flex-direction:column;align-items:center;color:#d56a3a;font-size:8.500px;gap:7px;white-space:nowrap;flex:none;line-height:9px}
.ks{display:flex;margin:${hi?13:12}px 0 0 7px;gap:10px}
.k{width:26px;height:26px;border-radius:50%;padding:2px;background:conic-gradient(from 225deg,#cf8519 0 var(--a),#241808 var(--a) 270deg,#101010 270deg)}
.k i{display:block;width:100%;height:100%;border-radius:50%;background:radial-gradient(circle at 50% 42%,#7d7d7d 0,#4a4a4a 32%,#141414 62%,#000 100%)}</style>
<div class="n">${h.getAttribute('n')}</div>
<div class="bd"><div class="p">
 <div class="rw" style="${open?'margin-top:6px':''}"><div class="pw">${ic('power',11)}</div><span style="margin-left:1px">${ic('edit',12,'#888b8e')}</span><span style="margin-left:2px">${ic('snow',12,'#888b8e')}</span><span style="margin-left:19px;font-size:10px;font-weight:700;color:#bccbd8;padding-top:2px">HALnSncSE</span><span style="margin-left:auto;margin-right:8px">${ic('down',10,'#8a8d90')}</span></div>
 ${open?`<div class="rw" style="margin-top:5px"><span style="margin-left:3px;color:#888b8e;font-size:8.500px">R</span><span style="margin-left:9px;color:#888b8e;font-size:8.500px">W</span><span style="margin-left:25px;font-size:10.500px;color:#bccbd8">Ch. 1</span></div><div class="lbs">${lab}</div>`:''}
</div>${open?`<div class="ks">${kn}</div>`:''}</div>
<div class="r">${ic(open?'ejectU':'eject',11,open?'#e8eaec':'#8a8d90')}${ic('meter',11)}</div>${hi?'<div class="f"></div>':''}`});

def('cb-right',()=>`<style>:host{margin-left:6px;margin-top:4px;width:227px;flex:none;height:868px;display:flex;flex-direction:column}
.tabs{display:flex;height:22px;flex:none;position:relative;z-index:1;font-size:12px;font-weight:700;color:#cfe0ee;align-items:flex-start}
.t1{width:55px;height:24px;border:1.500px solid #565a5e;border-bottom:0;border-radius:6px 6px 0 0;background:#23272b;color:#fff;display:flex;align-items:center;justify-content:center}
.t{display:flex;align-items:center}
.body{height:846px;flex:none;background:#23272b;border:1.500px solid #565a5e;border-radius:0 8px 8px 8px;padding:0}
.tools{display:flex;height:18px;margin-top:9px}
.rack{margin:10px 0 0 6px;width:212px;border:1px solid #000;display:flex;flex-direction:column}
.bt{display:flex;width:212px;margin-left:6px;height:21px;align-items:center;font-weight:700;font-size:12px;color:#cfe0ee;border-bottom:1px solid #b9bdc0;padding:0 0 0 34px;gap:4px}</style>
<div class="tabs"><div class="t1">VSTi</div>${place([[12,40,'<div class="t" style="height:24px">Media</div>'],[78,20,'<div class="t" style="height:24px">CR</div>'],[125,40,'<div class="t" style="height:24px">Meter</div>']])}</div>
<div class="body">
<div class="tools">${place([[17,26,`<div class="g" style="height:18px;background:#1b1e21;border-color:#5a5e62"><div class="c" style="gap:0">${ic('plus',10)}${ic('strKey',13,'#fff')}</div></div>`],[54.500,25,`<div class="g" style="height:18px;background:#2a2e32;border-color:#5a5e62"><div class="c">${ic('search',13)}</div></div>`],[118.500,50,`<div class="g" style="height:18px;background:#2a2e32;border-color:#5a5e62"><div class="c">${ic('arrowU',13)}</div><div class="c">${ic('arrowD',13)}</div></div>`],[171.500,25,`<div class="g" style="height:18px;background:#2a2e32;border-color:#5a5e62"><div class="c">${ic('eject',14)}</div></div>`],[199.500,15,`<div class="g" style="height:18px;background:#2a2e32;border-color:#5a5e62"><div class="c">${ic('gear',12)}</div></div>`]])}</div>
<div class="rack">
<cb-slot n="1"></cb-slot>
<cb-slot n="2" open labs="Tone/Color|S1 QC2/Emphasis|Amp/Decay|Pan Key/Follow" arcs="230,30,210,40"></cb-slot>
<cb-slot n="3"></cb-slot>
<cb-slot n="4" open hi labs="Rotary/Bypass/g|Rotary/Drive|Rotary/Balance|Drum/Angle" arcs="30,50,140,190"></cb-slot>
</div>
<div class="bt">${ic('up',11,'#dfe8ef')}<span>Track</span><span style="margin-left:50px">Rack</span>${ic('down',11,'#dfe8ef')}</div>
</div>`);

def('cb-transport',()=>{
const it=[
[4,25,`<div class="g" style="background:#3a3e42;border-color:#5a5e62"><div class="c">${ic('clock',18)}</div></div>`],
[35,43,`<div class="g" style="background:#1b1e21"><div class="c" style="flex:none;width:28px">${ic('rec',20)}</div><div class="c">${ic('down',9)}</div></div>`],
[89,43,`<div class="g" style="background:#1b1e21"><div class="c" style="flex:none;width:28px">${ic('awave',20)}</div><div class="c">${ic('down',9)}</div></div>`],
[145,42,`<div class="g" style="background:#1b1e21"><div class="c" style="flex:none;width:28px">${ic('midi',20)}</div><div class="c">${ic('down',9)}</div></div>`],
[200,36,`<div class="g"><div class="c" style="font-size:13px">AQ</div></div>`],
[530,148,`<div class="g" style="background:#1b1e21"><div class="c" style="flex:none;width:24px;background:#5a5e62">${ic('lm',15)}</div><div class="n">1. 1. 1.   0</div></div>`],
[686,149,`<div class="g" style="background:#1b1e21"><div class="c" style="flex:none;width:24px;background:#5a5e62">${ic('rm',15)}</div><div class="n">9. 1. 1.   0</div></div>`],
[841,73,`<div class="g" style="border-color:#5a5e62"><div class="c w" style="flex:none;width:24px">${ic('lock',15)}</div><div class="c">${ic('down',10)}</div><div class="c">${ic('up',10)}</div></div>`],
[926,199,`<div class="g" style="height:32px;border:2px solid #b9bdc0;background:#5f6367;border-radius:4px"><div class="c">${ic('cycle',18)}</div><div class="c" style="background:#e6edf4;color:#000"><svg width="12" height="14"><rect x="1.500" y="1.500" width="9" height="11" fill="none" stroke="#000" stroke-width="3"/></svg></div><div class="c">${ic('play',20)}</div><div class="c">${ic('recO',20)}</div></div>`,'margin-top:-3px'],
[1138,36,`<div class="g" style="background:#5a5e62;border-color:#6a6e72;color:#9a9ea2"><div class="c">${ic('monitor',16)}</div></div>`],
[1180,150,`<div class="g" style="background:#1b1e21"><div class="c" style="flex:none;width:24px;border-right:1px solid #5a5e62">${ic('note',16)}</div><div class="n" style="color:#e9e2c8">1. 1. 1.   0</div></div>`],
[1341,106,`<div class="g" style="background:#1b1e21"><div class="c" style="flex:none;width:24px;background:#5a5e62">${ic('tempo',16)}</div><div class="c" style="font-size:12px;justify-content:flex-end;padding-right:5px;gap:5px"><span>120.000</span><span style="display:flex;flex-direction:column;gap:2px">${ic('up',9)}${ic('down',9)}</span></div></div>`],
[1736,49,`<div class="g"><div class="c">${ic('metro',15)}</div><div class="c">${ic('edit',16)}</div></div>`],
[1798,88,`<div class="g" style="background:#1b1e21;border-color:#4e5256"><div style="width:26px;margin-left:0;border-right:1px solid #4e5256"></div></div>`],
[1898,17,`<div class="g" style="background:#1b1e21;border-color:#5a5e62"><div class="c">${ic('gear',12)}</div></div>`]];
return `<style>:host{height:40px;flex:none;background:#24282c;position:relative}
.r{display:flex;height:40px;padding-top:7px}
.n{flex:1;white-space:pre;text-align:right;font-size:14px;line-height:23px;padding-right:5px;color:#e8eef4;letter-spacing:1.600px}
.o{position:absolute;left:1900px;top:-35px;width:42px;height:42px;border-radius:50%;background:#06080a;border:1px solid #3a6a80;display:flex;align-items:center;padding-left:6px}
.o i{display:block;width:8px;height:8px;border-left:2px solid #ddd;border-bottom:2px solid #ddd;transform:rotate(45deg)}</style>
<div class="o"><i></i></div><div class="r">${place(it)}</div>`});
</script>
</body></html>
